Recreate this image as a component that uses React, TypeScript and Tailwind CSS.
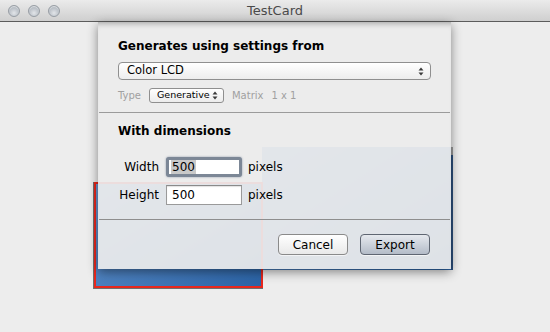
import React from "react";

const FONT = { fontFamily: '"DejaVu Sans", "Liberation Sans", sans-serif' };

function Light() {
  return (
    <span className="size-[12px] rounded-full border border-[#979da4] bg-[radial-gradient(circle_at_50%_70%,#e2e5e9_0%,#b8bec5_60%,#a3aab2_100%)] shadow-[inset_0_1px_1px_rgba(255,255,255,0.6)]" />
  );
}

function Stepper() {
  return (
    <svg width="6" height="9" viewBox="0 0 6 9" className="shrink-0">
      <path d="M3 0.5 L5.5 3.5 H0.5 Z" fill="#3a3a3a" />
      <path d="M3 8.5 L5.5 5.5 H0.5 Z" fill="#3a3a3a" />
    </svg>
  );
}

function Field({ focused }: { focused?: boolean }) {
  return (
    <div
      className={
        focused
          ? "flex h-[20px] w-[76px] items-center rounded-[3px] border-[3px] border-[#7c8796] bg-white pl-[2px] shadow-[0_0_2px_rgba(60,80,110,0.6)]"
          : "flex h-[20px] w-[76px] items-center border border-[#9a9a9a] border-t-[#8a8a8a] bg-white pl-[5px] shadow-[inset_0_1px_1px_rgba(0,0,0,0.12)]"
      }
    >
      <span className={focused ? "bg-[#c9c9c9] px-px text-[12px] leading-[14px] text-black" : "text-[12px] leading-[14px] text-black"}>
        500
      </span>
    </div>
  );
}

export default function App() {
  return (
    <div className="flex h-[332px] w-[550px] flex-col overflow-hidden bg-[#ededed]" style={FONT}>
      {/* title bar */}
      <div className="relative flex h-[22px] shrink-0 items-center border-b border-[#5c5c5c] bg-gradient-to-b from-[#ebebeb] to-[#cfcfcf]">
        <div className="flex items-center gap-[8px] pl-[8px]">
          <Light />
          <Light />
          <Light />
        </div>
        <div className="absolute inset-x-0 top-0 flex h-[21px] items-center justify-center text-[13px] text-[#4a4a4a]">
          TestCard
        </div>
      </div>

      <div className="relative flex-1">
        {/* cards on the canvas */}
        <div className="absolute left-[262px] top-[125px] h-[123px] w-[191px] border-r-2 border-[#2c4f7c] bg-gradient-to-br from-[#6d9bd2] to-[#2e66a8]" />
        <div className="absolute left-[451px] top-[125px] h-[8px] w-[2px] bg-[#9a9a9a]" />
        <div className="absolute left-[93px] top-[160px] h-[107px] w-[170px] border-b border-l border-[#6f6f6f]">
          <div className="size-full border-2 border-[#e8271d] bg-gradient-to-br from-[#6a9ad3] to-[#2a63a6]" />
        </div>

        {/* sheet */}
        <div className="absolute left-[98px] top-0 flex h-[247px] w-[353px] flex-col bg-[rgba(236,236,236,0.93)] text-black shadow-[0_3px_10px_rgba(0,0,0,0.45),inset_0_6px_6px_-5px_rgba(0,0,0,0.35)]">
          <div className="px-[20px] pt-[16px]">
            <div className="text-[12px] font-bold leading-[16px]">Generates using settings from</div>
            <div className="mt-[8px] flex h-[18px] items-center justify-between rounded-[4px] border border-[#8f8f8f] bg-gradient-to-b from-white to-[#ededed] pl-[8px] pr-[6px] text-[11.5px]">
              <span>Color LCD</span>
              <Stepper />
            </div>
            <div className="mt-[8px] flex h-[15px] items-center text-[10px] text-[#a0a0a0]">
              <span>Type</span>
              <div className="ml-[8px] flex h-[15px] w-[75px] items-center justify-between rounded-[3px] border border-[#8f8f8f] bg-gradient-to-b from-white to-[#ececec] pl-[7px] pr-[5px] text-black">
                <span className="text-[9.5px]">Generative</span>
                <Stepper />
              </div>
              <span className="ml-[8px]">Matrix</span>
              <span className="ml-[8px]">1 x 1</span>
            </div>
          </div>
          <div className="mx-px mt-[9px] h-px bg-[#9b9b9b]" />
          <div className="px-[20px]">
            <div className="mt-[10px] text-[12px] font-bold leading-[16px]">With dimensions</div>
            <div className="mt-[18px] flex items-center text-[12px]">
              <span className="w-[41px] text-right">Width</span>
              <div className="ml-[7px]">
                <Field focused />
              </div>
              <span className="ml-[6px]">pixels</span>
            </div>
            <div className="mt-[8px] flex items-center text-[12px]">
              <span className="w-[41px] text-right">Height</span>
              <div className="ml-[7px]">
                <Field />
              </div>
              <span className="ml-[6px]">pixels</span>
            </div>
          </div>
          <div className="mx-px mt-[14px] h-px bg-[#8e8e8e]" />
          <div className="mt-[14px] flex justify-end gap-[12px] pr-[21px] text-[12px]">
            <button className="flex h-[21px] w-[70px] items-center justify-center rounded-[4px] border border-[#8a8a8a] bg-gradient-to-b from-white to-[#e9e9e9] shadow-[0_1px_0_rgba(255,255,255,0.6)]">
              Cancel
            </button>
            <button className="flex h-[21px] w-[70px] items-center justify-center rounded-[4px] border border-[#5f6672] bg-gradient-to-b from-[#e6e9ee] to-[#b4bcc8] shadow-[0_1px_0_rgba(255,255,255,0.6)]">
              Export
            </button>
          </div>
        </div>
      </div>
    </div>
  );
}
